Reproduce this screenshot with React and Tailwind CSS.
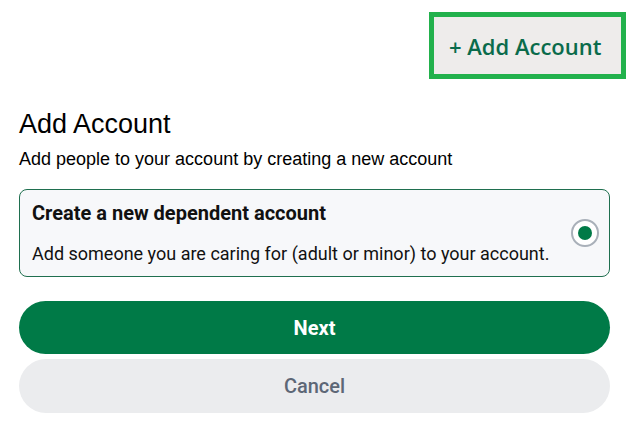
export default function App() {
  return (
    <div className="w-[640px] h-[438px] bg-white overflow-hidden font-['Roboto',sans-serif]">
      {/* top action */}
      <div className="flex justify-end pt-[12px] pr-[14px]">
        <button className="w-[197px] h-[67px] border-[5px] border-[#22b14c] bg-[#eeeceb] flex items-center pl-[15px] font-['Open_Sans',sans-serif] font-semibold text-[22px] leading-none text-[#0a6b4b]">
          + Add Account
        </button>
      </div>

      <div className="px-[19px] pr-[30px]">
        <h1 className="mt-[32px] font-['Liberation_Sans',Arial,sans-serif] text-[27px] leading-none text-black">
          Add Account
        </h1>
        <p className="mt-[12px] font-['Liberation_Sans',Arial,sans-serif] text-[18px] leading-none text-black">
          Add people to your account by creating a new account
        </p>

        {/* option card */}
        <label className="mt-[21px] h-[88px] flex items-center justify-between rounded-[8px] border border-[#1f6f4f] bg-[#f7f8fa] pl-[12px] pr-[10px]">
          <div className="flex flex-col">
            <span className="text-[20px] leading-none font-bold text-[#111]">Create a new dependent account</span>
            <span className="mt-[22px] text-[18px] leading-none text-[#111]">
              Add someone you are caring for (adult or minor) to your account.
            </span>
          </div>
          <span className="w-[28px] h-[28px] rounded-full border-2 border-[#a9b0b9] bg-white flex items-center justify-center">
            <span className="w-[14px] h-[14px] rounded-full bg-[#007a47]" />
          </span>
        </label>

        {/* actions */}
        <div className="mt-[24px] flex flex-col gap-[5px]">
          <button className="h-[53px] w-full rounded-full bg-[#007a47] text-white text-[20px] font-bold leading-none">
            Next
          </button>
          <button className="h-[54px] w-full rounded-full bg-[#ebecee] text-[#5d6776] text-[20px] font-medium leading-none">
            Cancel
          </button>
        </div>
      </div>
    </div>
  );
}
